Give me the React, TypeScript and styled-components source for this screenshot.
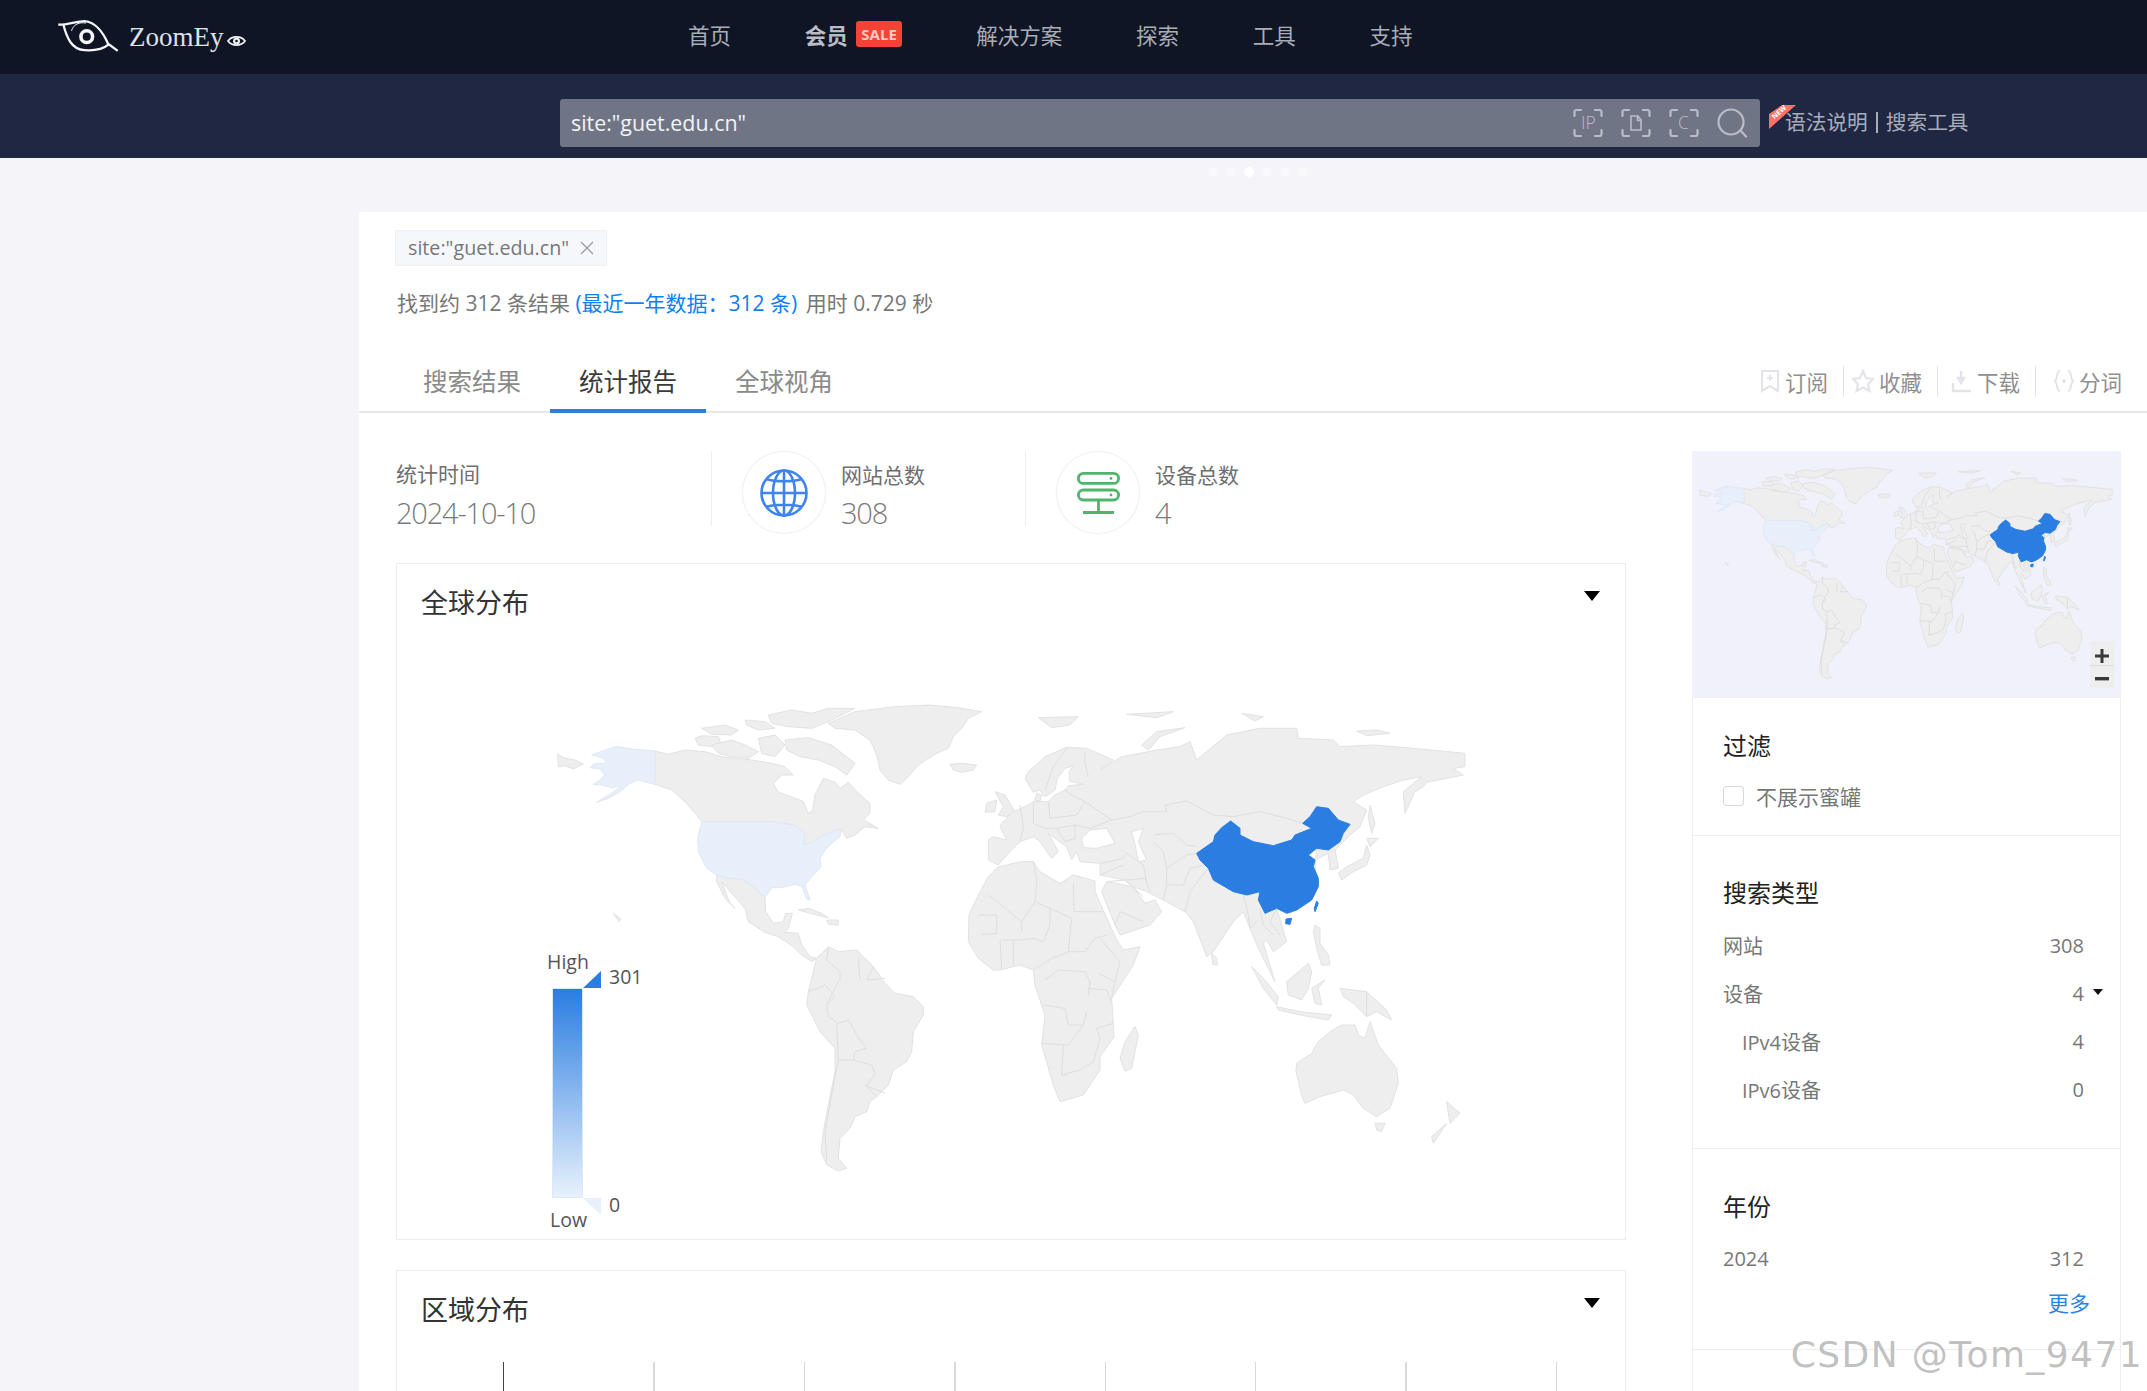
import React from 'react'
import styled, { createGlobalStyle } from 'styled-components'

const FONT = `"Open Sans", "Noto Sans CJK SC", sans-serif`

const GlobalStyle = createGlobalStyle`
  html, body {
    margin: 0;
    height: 1391px;
    overflow: hidden;
    background: #f4f4f9;
    font-family: ${FONT};
  }
  * { box-sizing: border-box; }
`

// map paths: coordinates are 3x screen pixels, left part and right part of the map
const LAND_LEFT = [
  'M38,178 L60,190 L90,195 L115,207 L85,222 L60,212 L40,215 Z',
  'M330,168 L370,178 L420,165 L480,170 L530,185 L570,190 L620,195 L680,205 L720,215 L745,240 L710,240 L685,265 L700,292 L740,305 L775,320 L790,355 L803,345 L810,300 L835,250 L870,262 L885,280 L910,262 L935,290 L975,325 L975,355 L955,375 L1000,400 L960,395 L930,420 L905,430 L888,402 L860,410 L830,425 L800,442 L775,450 L780,415 L745,390 L680,380 L470,380 L455,360 L420,320 L380,285 L330,268 Z',
  'M450,130 L470,122 L520,125 L530,150 L500,155 L460,150 Z',
  'M500,150 L560,135 L600,150 L640,170 L610,190 L560,185 L520,175 Z',
  'M470,100 L540,90 L580,105 L560,120 L500,118 Z',
  'M600,75 L660,80 L690,100 L640,105 L605,90 Z',
  'M670,60 L740,45 L800,55 L850,40 L930,40 L860,75 L800,100 L730,95 L680,85 Z',
  'M720,135 L790,128 L860,150 L930,205 L905,240 L870,215 L820,195 L765,185 L725,165 Z',
  'M640,130 L690,120 L720,150 L690,185 L650,175 Z',
  'M850,85 L930,50 L1050,35 L1150,30 L1240,38 L1310,50 L1270,70 L1250,100 L1225,125 L1210,160 L1175,175 L1120,210 L1085,250 L1065,268 L1030,255 L1005,225 L995,180 L975,135 L930,105 L870,100 Z',
  'M1215,208 L1250,205 L1295,210 L1285,225 L1250,232 L1225,225 Z',
  'M515,540 L555,550 L590,552 L625,575 L660,608 L662,650 L685,685 L715,680 L722,655 L742,655 L730,700 L720,712 L760,715 L770,750 L795,785 L815,790 L800,800 L770,780 L745,755 L700,725 L660,712 L610,680 L600,640 L565,600 L530,560 L555,625 L570,640 L540,610 L515,560 Z',
  'M760,645 L790,640 L830,655 L850,668 L815,660 Z',
  'M845,675 L880,675 L880,690 L850,688 Z',
  'M205,655 L228,672 L222,680 Z',
  'M815,790 L850,755 L880,770 L935,765 L985,815 L1020,865 L1050,895 L1105,905 L1135,935 L1135,960 L1105,1010 L1100,1070 L1085,1100 L1045,1125 L1030,1170 L995,1205 L975,1220 L965,1250 L930,1265 L915,1300 L885,1330 L880,1390 L905,1420 L880,1428 L845,1410 L828,1370 L835,1310 L850,1230 L870,1130 L870,1060 L825,1010 L785,930 L790,890 Z',
  'M1350,290 L1380,300 L1410,350 L1385,365 L1360,360 L1375,335 Z',
  'M1325,325 L1355,315 L1350,350 L1320,352 Z',
]

const BORDERS_LEFT = [
  'M880,860 L845,930 L850,965 L880,985 L910,975 L945,1035 L965,1060 L930,1070 L925,1095 L980,1110 L990,1135 L965,1175 L995,1205',
  'M850,760 L845,795 L885,830 L885,860',
  'M940,790 L945,855',
  'M985,815 L965,855 L1020,850',
  'M790,890 L840,870 L870,905 L845,930',
  'M875,985 L880,1095 L925,1095',
  'M880,1095 L860,1200 L840,1310 L845,1400',
  'M960,1170 L1020,1195',
]

const USA = [
  'M470,380 L680,380 L745,390 L780,415 L775,450 L800,442 L830,425 L860,410 L888,402 L885,425 L860,445 L840,465 L825,490 L828,515 L800,545 L780,570 L795,615 L785,612 L772,575 L750,568 L710,578 L680,578 L660,608 L625,575 L590,552 L555,550 L515,540 L485,520 L460,470 L458,430 Z',
  'M330,168 L330,268 L305,262 L280,255 L255,265 L225,290 L185,312 L155,322 L195,298 L230,272 L200,278 L170,270 L145,268 L165,255 L180,240 L165,222 L135,218 L150,205 L185,205 L175,190 L140,180 L180,165 L215,154 L260,162 Z',
]

const LAND_RIGHT = [
  // africa
  'M-5,515 L0,515 L60,500 L100,500 L120,530 L180,565 L220,540 L285,558 L285,590 L350,735 L370,765 L420,755 L400,810 L335,910 L342,1025 L300,1085 L300,1125 L250,1200 L180,1220 L160,1170 L125,1050 L135,960 L105,870 L100,825 L60,810 L0,825 L-20,825 L-65,790 L-95,740 L-93,660 L-65,600 L-35,545 Z',
  'M405,995 L415,1020 L395,1120 L375,1128 L360,1090 L375,1040 Z',
  'M305,590 L320,560 L400,575 L435,625 L465,615 L485,650 L450,690 L360,720 L345,690 Z',
  // eurasia with black sea and caspian
  'M-35,435 L-20,425 L20,435 L0,395 L5,385 L40,350 L75,335 L100,320 L145,320 L165,300 L195,285 L205,272 L250,268 L208,258 L208,228 L222,212 L195,220 L172,250 L165,285 L135,305 L118,285 L100,292 L75,250 L85,230 L135,185 L200,157 L260,160 L340,195 L300,225 L365,185 L420,175 L470,165 L540,155 L570,140 L590,195 L680,120 L780,100 L890,100 L895,130 L1000,135 L1020,155 L1120,150 L1240,160 L1395,175 L1395,215 L1360,220 L1390,240 L1280,262 L1270,275 L1245,290 L1215,355 L1210,290 L1265,245 L1210,255 L1150,275 L1090,300 L1060,320 L1100,345 L1080,395 L1050,420 L1030,440 L1005,465 L1015,520 L990,525 L985,475 L945,495 L925,480 L950,460 L945,510 L955,570 L930,620 L870,655 L830,640 L860,740 L820,770 L800,735 L790,745 L825,860 L775,760 L750,700 L730,650 L700,680 L640,770 L620,785 L580,680 L555,650 L490,615 L440,590 L400,575 L375,555 L300,540 L300,505 L240,500 L230,470 L215,495 L200,455 L145,415 L175,470 L155,490 L120,440 L100,425 L60,440 L30,470 L-5,510 L-35,495 Z M245,430 L270,405 L320,400 L345,445 L290,460 L250,458 Z M395,410 L430,400 L415,440 L440,495 L415,500 L405,450 Z',
  'M105,318 L110,295 L125,300 L120,318 Z',
  'M1015,535 L1040,515 L1090,490 L1100,450 L1110,480 L1100,510 L1060,530 L1025,555 Z',
  'M1100,430 L1135,430 L1110,455 Z',
  'M1110,330 L1125,385 L1115,415 L1105,370 Z',
  'M945,690 L960,700 L960,745 L985,780 L990,810 L965,810 L950,760 L940,710 Z',
  'M755,815 L790,850 L835,905 L830,930 L790,880 Z',
  'M830,935 L900,950 L995,960 L985,975 L900,960 L835,945 Z',
  'M860,860 L925,805 L935,830 L925,880 L905,915 L865,900 Z',
  'M935,880 L975,855 L955,880 L965,930 L945,925 Z',
  'M1020,880 L1100,890 L1160,945 L1175,975 L1130,950 L1100,965 L1060,925 L1030,905 Z',
  'M635,775 L650,790 L652,810 L638,808 Z',
  'M890,1105 L935,1075 L955,1040 L990,1010 L1025,990 L1065,990 L1075,1020 L1095,1030 L1110,980 L1135,1050 L1190,1120 L1195,1165 L1170,1240 L1130,1265 L1090,1240 L1060,1200 L1030,1185 L960,1205 L915,1225 L905,1200 L888,1130 Z',
  'M1125,1285 L1155,1285 L1145,1310 L1130,1305 Z',
  'M1340,1220 L1380,1255 L1350,1285 L1345,1255 Z',
  'M1340,1285 L1300,1345 L1295,1325 Z',
  'M115,68 L235,65 L210,90 L155,98 Z',
  'M380,58 L520,50 L470,68 Z',
  'M725,55 L790,65 L765,78 Z',
  'M1070,108 L1130,105 L1170,115 L1100,122 Z',
  'M425,150 L470,110 L555,98 L480,125 L445,165 Z',
]

const BORDERS_RIGHT = [
  'M-35,600 L-15,615 L65,680 L65,710',
  'M-65,660 L-10,660 L-10,715 L-55,718',
  'M100,500 L110,555 L105,620 L65,680',
  'M220,565 L222,650 L310,650',
  'M150,640 L215,670 L205,770',
  'M105,620 L150,640 L150,690 L130,740 L100,730 L60,735 L10,735',
  'M205,770 L255,770 L285,730 L320,720',
  'M300,730 L360,800 L345,860',
  'M100,825 L155,790 L205,770',
  'M135,855 L175,825 L255,830 L270,860 L265,900',
  'M295,835 L345,860 L335,910',
  'M265,880 L320,885 L335,925',
  'M130,930 L195,940 L205,990 L250,990 L260,950',
  'M125,1045 L205,1050 L250,990',
  'M190,1050 L185,1140 L200,1140',
  'M340,985 L290,1000 L300,1030 L280,1100',
  'M185,1140 L240,1125 L280,1100',
  'M0,735 L5,820',
  'M40,735 L40,810',
  'M60,330 L70,400 L60,440',
  'M100,320 L100,385 L135,400',
  'M145,320 L150,370 L230,360 L255,320 L215,300 L195,285',
  'M255,320 L335,375 L270,400 L225,390 L170,400 L135,400',
  'M170,400 L195,440',
  'M225,390 L225,430 L195,440',
  'M200,160 L160,215 L135,285',
  'M255,170 L255,205 L265,245',
  'M335,375 L390,365 L430,350 L500,350 L495,330 L560,318 L640,360 L700,365 L780,350 L860,370 L908,385',
  'M305,505 L370,490 L380,475 L430,510 L440,560',
  'M300,540 L370,510',
  'M380,555 L435,550 L450,590',
  'M460,440 L490,470 L500,520 L500,570 L490,615',
  'M500,520 L560,480 L590,475',
  'M500,570 L550,570 L570,520 L610,510',
  'M555,650 L570,590 L600,550 L625,520',
  'M460,420 L520,415 L560,450 L590,455',
  'M640,555 L700,590',
  'M730,600 L745,660 L750,700 L770,680',
  'M780,640 L790,690 L820,720',
  'M830,640 L810,680 L840,720',
  'M320,560 L375,555 L430,605',
  'M345,690 L360,650 L430,680',
  'M1100,890 L1100,965',
]

const CHINA = [
  'M590,475 L640,440 L645,420 L665,398 L692,378 L720,400 L720,420 L760,440 L820,452 L875,435 L885,420 L935,400 L908,385 L930,365 L950,335 L985,340 L1015,375 L1050,388 L1030,415 L1020,440 L985,465 L950,460 L925,480 L945,495 L940,515 L955,550 L955,575 L935,615 L890,645 L860,655 L830,640 L795,655 L775,615 L780,590 L740,600 L700,590 L640,555 L625,520 L600,495 Z',
  'M950,618 L955,625 L945,650 L943,640 Z',
  'M858,672 L875,670 L870,688 L857,686 Z',
]

const WorldMap = ({ width, height }: { width: number; height: number }) => (
  <svg width={width} height={height} viewBox="0 0 2805 1470" preserveAspectRatio="none">
    <g fill="#eeeeee" stroke="#e2e2e2">
      {LAND_LEFT.map((d) => <path key={d} d={d} vectorEffect="non-scaling-stroke" />)}
    </g>
    <g fill="none" stroke="#dedede">
      {BORDERS_LEFT.map((d) => <path key={d} d={d} vectorEffect="non-scaling-stroke" />)}
    </g>
    <g fill="#e7effa" stroke="#dfe8f5">
      {USA.map((d) => <path key={d} d={d} vectorEffect="non-scaling-stroke" />)}
    </g>
    <g transform="translate(1365 0)">
      <g fill="#eeeeee" stroke="#e2e2e2" fillRule="evenodd">
        {LAND_RIGHT.map((d) => <path key={d} d={d} vectorEffect="non-scaling-stroke" />)}
      </g>
      <g fill="none" stroke="#dedede">
        {BORDERS_RIGHT.map((d) => <path key={d} d={d} vectorEffect="non-scaling-stroke" />)}
      </g>
      <g fill="#2a7de1" stroke="#2a7de1">
        {CHINA.map((d) => <path key={d} d={d} vectorEffect="non-scaling-stroke" />)}
      </g>
    </g>
  </svg>
)

const Logo = () => (
  <svg width="63" height="35" viewBox="80 55 195 105" fill="none" stroke="#f4f5f7">
    <path strokeWidth="7" d="M84,70 C105,75 125,62 165,60 C200,62 225,100 238,130 L268,152" />
    <path strokeWidth="7" d="M100,72 C110,110 125,148 165,150 C195,152 225,145 240,132" />
    <circle cx="172" cy="108" r="18" strokeWidth="11" />
    <path strokeWidth="3" d="M125,90 C130,70 150,62 170,66" />
  </svg>
)

const SmallEye = () => (
  <svg width="19" height="14" viewBox="0 0 19 14" fill="none" stroke="#f0f1f3">
    <path strokeWidth="1.8" d="M1,7 C5,1.5 14,1.5 18,7 C14,12.5 5,12.5 1,7 Z" />
    <circle cx="9.5" cy="7" r="2.4" strokeWidth="2.2" />
  </svg>
)

const ScanIcon = ({ children }: { children: React.ReactNode }) => (
  <svg width="30" height="30" viewBox="0 0 30 30" fill="none" stroke="#b9bcc7" strokeWidth="2.2" strokeLinecap="round">
    <path d="M8,2 H3.5 Q1.5,2 1.5,4 V8 M22,2 H26.5 Q28.5,2 28.5,4 V8 M1.5,22 V26 Q1.5,28 3.5,28 H8 M28.5,22 V26 Q28.5,28 26.5,28 H22" />
    {children}
  </svg>
)

const ScanLabel = styled.text`
  font-family: ${FONT};
  font-size: 17.5px;
  font-weight: 300;
  fill: #b9bcc7;
  stroke: none;
`

const SearchGlass = () => (
  <svg width="31" height="30" viewBox="0 0 31 30" fill="none" stroke="#b9bcc7" strokeWidth="2.2" strokeLinecap="round">
    <circle cx="14" cy="14" r="12.5" />
    <path d="M23.5,22.5 L29,28.5" />
  </svg>
)

const NewRibbon = () => (
  <RibbonBox width="27" height="24" viewBox="0 0 27 24">
    <path d="M0,9 L13,0 L27,0 L0,24 Z" fill="#f97366" />
    <RibbonLabel transform="translate(5.5 14.5) rotate(-42)">NEW</RibbonLabel>
  </RibbonBox>
)

const GlobeIcon = () => (
  <svg width="48" height="48" viewBox="0 0 48 48" fill="none" stroke="#3f83f0" strokeWidth="2.6">
    <circle cx="24" cy="24" r="22.5" />
    <ellipse cx="24" cy="24" rx="11" ry="22.5" />
    <path d="M24,1.5 V46.5 M1.5,24 H46.5 M6,10 C15,13 33,13 42,10 M6,38 C15,35 33,35 42,38" />
  </svg>
)

const ServerIcon = () => (
  <svg width="43" height="42" viewBox="0 0 43 42" fill="none" stroke="#4fb56c" strokeWidth="2.8">
    <rect x="1.4" y="1.4" width="40.2" height="10" rx="5" />
    <rect x="1.4" y="18" width="40.2" height="10" rx="5" />
    <circle cx="34" cy="6.4" r="1.4" fill="#4fb56c" stroke="none" />
    <circle cx="34" cy="23" r="1.4" fill="#4fb56c" stroke="none" />
    <path d="M21.5,28 V40 M6,40.5 H37" />
  </svg>
)

const BookmarkIcon = () => (
  <svg width="20" height="24" viewBox="0 0 20 24" fill="none" stroke="#e3e4e9" strokeWidth="2.2">
    <path d="M2,2 H18 V22 L10,17 L2,22 Z" />
    <path d="M10,6 V12 M7,9 H13" />
  </svg>
)

const StarIcon = () => (
  <svg width="22" height="24" viewBox="0 0 22 24" fill="none" stroke="#e3e4e9" strokeWidth="2.2">
    <path d="M11,2 L14,9 L21,10 L16,15 L17.5,22 L11,18.5 L4.5,22 L6,15 L1,10 L8,9 Z" />
  </svg>
)

const DownloadIcon = () => (
  <svg width="21" height="24" viewBox="0 0 21 24" fill="none" stroke="#e3e4e9" strokeWidth="2.4">
    <path d="M2,14 V22 H20" />
    <path d="M10,2 V11" />
    <path d="M7,9 L10,14 L13,9 Z" fill="#e3e4e9" />
  </svg>
)

const BracesIcon = () => (
  <svg width="20" height="24" viewBox="0 0 20 24" fill="none" stroke="#e3e4e9" strokeWidth="2">
    <path d="M6,2 C2,2 4,10 1,12 C4,14 2,22 6,22 M14,2 C18,2 16,10 19,12 C16,14 18,22 14,22" />
    <circle cx="10" cy="12" r="1" fill="#e3e4e9" />
  </svg>
)

const NAV_ITEMS = ['首页', '会员', '解决方案', '探索', '工具', '支持']
const TABS = ['搜索结果', '统计报告', '全球视角']
const GRID_LINES = [true, false, false, false, false, false, false, false]

export default function App() {
  return (
    <Page>
      <GlobalStyle />
      <TopBar>
        <Brand>
          <Logo />
          <BrandName>ZoomEy</BrandName>
          <BrandEye><SmallEye /></BrandEye>
        </Brand>
        <Nav>
          {NAV_ITEMS.map((item) => (
            <NavItem key={item} $bold={item === '会员'}>
              {item}
              {item === '会员' && <SaleBadge>SALE</SaleBadge>}
            </NavItem>
          ))}
        </Nav>
      </TopBar>

      <SearchBand>
        <SearchBox>
          <SearchText>site:"guet.edu.cn"</SearchText>
          <SearchIcons>
            <ScanIcon><ScanLabel x="8" y="21">IP</ScanLabel></ScanIcon>
            <ScanIcon>
              <path d="M10,8 H17 L20,12 V22 H10 Z M16.5,8 V12.5 H20" strokeWidth="1.6" />
            </ScanIcon>
            <ScanIcon><ScanLabel x="9" y="21">C</ScanLabel></ScanIcon>
            <SearchGlass />
          </SearchIcons>
        </SearchBox>
        <SearchLinks>
          <NewRibbon />
          语法说明
          <LinkDivider />
          搜索工具
        </SearchLinks>
      </SearchBand>

      <Dots>
        {[0, 1, 2, 3, 4, 5].map((i) => <Dot key={i} $active={i === 2} />)}
      </Dots>

      <Panel>
        <PanelHead>
          <QueryTag>
            site:"guet.edu.cn"
            <svg width="14" height="14" viewBox="0 0 14 14" stroke="#9a9ca3" strokeWidth="1.3">
              <path d="M1,1 L13,13 M13,1 L1,13" />
            </svg>
          </QueryTag>
          <Summary>
            找到约 312 条结果 <Accent>(最近一年数据：312 条)</Accent> 用时 0.729 秒
          </Summary>
        </PanelHead>

        <TabBar>
          <Tabs>
            {TABS.map((tab) => (
              <Tab key={tab} $active={tab === '统计报告'}>{tab}</Tab>
            ))}
          </Tabs>
          <Actions>
            <Action><BookmarkIcon />订阅</Action>
            <Action $pad={8}><StarIcon />收藏</Action>
            <Action $pad={13}><DownloadIcon />下载</Action>
            <Action $pad={18}><BracesIcon />分词</Action>
          </Actions>
        </TabBar>

        <Content>
          <MainColumn>
            <Stats>
              <DateStat>
                <StatLabel $tight>统计时间</StatLabel>
                <StatValue>2024-10-10</StatValue>
              </DateStat>
              <IconStat>
                <IconCircle><GlobeIcon /></IconCircle>
                <div>
                  <StatLabel>网站总数</StatLabel>
                  <StatValue>308</StatValue>
                </div>
              </IconStat>
              <IconStat $last>
                <IconCircle><ServerIcon /></IconCircle>
                <div>
                  <StatLabel>设备总数</StatLabel>
                  <StatValue>4</StatValue>
                </div>
              </IconStat>
            </Stats>

            <Card>
              <CardHead>
                <CardTitle>全球分布</CardTitle>
                <CardCaret />
              </CardHead>
              <MapArea>
                <WorldMap width={935} height={490} />
                <Legend>
                  <LegendHigh>High</LegendHigh>
                  <LegendBar />
                  <LegendMaxMark />
                  <LegendMax>301</LegendMax>
                  <LegendMinMark />
                  <LegendMin>0</LegendMin>
                  <LegendLow>Low</LegendLow>
                </Legend>
              </MapArea>
            </Card>

            <LastCard>
              <CardHead>
                <CardTitle>区域分布</CardTitle>
                <CardCaret />
              </CardHead>
              <GridLines>
                {GRID_LINES.map((dark, i) => <GridLine key={i} $dark={dark} />)}
              </GridLines>
            </LastCard>
          </MainColumn>

          <SideColumn>
            <MiniMap>
              <WorldMap width={425} height={222} />
              <ZoomControl>
                <ZoomButton $top>
                  <svg width="14" height="14" viewBox="0 0 14 14" fill="#3a3a3a">
                    <path d="M5.5,0 H8.5 V5.5 H14 V8.5 H8.5 V14 H5.5 V8.5 H0 V5.5 H5.5 Z" />
                  </svg>
                </ZoomButton>
                <ZoomButton>
                  <svg width="14" height="4" viewBox="0 0 14 4" fill="#3a3a3a">
                    <rect width="14" height="3.4" />
                  </svg>
                </ZoomButton>
              </ZoomControl>
            </MiniMap>

            <SideBox>
              <FilterSection>
                <SideTitle>过滤</SideTitle>
                <CheckRow>
                  <CheckBox />
                  不展示蜜罐
                </CheckRow>
              </FilterSection>

              <TypeSection>
                <SideTitle>搜索类型</SideTitle>
                <Rows>
                  <Row><span>网站</span><span>308</span></Row>
                  <Row><span>设备</span><Count>4</Count></Row>
                  <Row $sub><span>IPv4设备</span><span>4</span></Row>
                  <Row $sub><span>IPv6设备</span><span>0</span></Row>
                </Rows>
              </TypeSection>

              <YearSection>
                <SideTitle>年份</SideTitle>
                <YearRows>
                  <Row><span>2024</span><span>312</span></Row>
                </YearRows>
                <More>更多</More>
              </YearSection>
            </SideBox>
          </SideColumn>
        </Content>
      </Panel>
      <Watermark>CSDN @Tom_9471</Watermark>
    </Page>
  )
}

const Page = styled.div`
  position: relative;
  height: 1391px;
  overflow: hidden;
  background: #f4f4f9;
`

const TopBar = styled.header`
  display: flex;
  align-items: center;
  height: 74px;
  padding: 0 0 2px 57px;
  background: #0f1524;
`

const Brand = styled.div`
  display: flex;
  align-items: center;
  width: 631px;
`

const BrandName = styled.span`
  margin-left: 9px;
  padding-top: 3px;
  font-family: "Liberation Serif", serif;
  font-size: 27px;
  color: #dfe1e6;
`

const BrandEye = styled.span`
  display: flex;
  margin: 10px 0 0 3px;
`

const Nav = styled.nav`
  display: flex;
  gap: 73.8px;
`

const NavItem = styled.a<{ $bold?: boolean }>`
  display: flex;
  align-items: center;
  font-size: 21.5px;
  line-height: 30px;
  font-weight: ${({ $bold }) => ($bold ? 700 : 400)};
  color: ${({ $bold }) => ($bold ? '#b9bcc4' : '#a9adb8')};
`

const SaleBadge = styled.span`
  margin-left: 8px;
  padding: 0 5.5px;
  height: 26px;
  border-radius: 3px;
  background: #f44336;
  font-family: "Open Sans", sans-serif;
  font-size: 15px;
  line-height: 26px;
  font-weight: 700;
  color: #ffc9c4;
  margin-top: -4px;
`

const SearchBand = styled.div`
  display: flex;
  align-items: center;
  height: 84px;
  padding: 14px 0 0 560px;
  background: #1f2742;
`

const SearchBox = styled.div`
  display: flex;
  align-items: center;
  justify-content: space-between;
  width: 1200px;
  height: 48px;
  padding: 0 12px 0 11px;
  border-radius: 3px;
  background: #707586;
`

const SearchText = styled.span`
  padding-bottom: 2px;
  font-size: 21.4px;
  color: #f2f3f5;
`

const SearchIcons = styled.div`
  display: flex;
  align-items: center;
  gap: 18px;
`

const SearchLinks = styled.div`
  position: relative;
  display: flex;
  align-items: center;
  margin: -2px 0 0 25px;
  font-size: 20.7px;
  line-height: 30px;
  color: #a9adba;
`

const RibbonBox = styled.svg`
  position: absolute;
  left: -16px;
  top: -2px;
  overflow: visible;
`

const RibbonLabel = styled.text`
  font-family: "Open Sans", sans-serif;
  font-size: 7px;
  font-weight: 700;
  fill: #fff;
`

const LinkDivider = styled.i`
  width: 2px;
  height: 21px;
  margin: 0 8px;
  background: #a9adba;
`

const Dots = styled.div`
  display: flex;
  gap: 8px;
  height: 54px;
  padding: 9px 0 0 1208px;
`

const Dot = styled.i<{ $active?: boolean }>`
  width: 10px;
  height: 10px;
  border-radius: 50%;
  background: ${({ $active }) => ($active ? '#ffffff' : '#f9f9fc')};
`

const Panel = styled.main`
  margin-left: 359px;
  height: 1179px;
  background: #fff;
`

const PanelHead = styled.div`
  height: 139px;
  padding: 18px 0 0 36px;
`

const QueryTag = styled.div`
  display: inline-flex;
  align-items: center;
  gap: 11px;
  height: 36px;
  padding: 0 12px 2px;
  border: 1px solid #eeeff2;
  border-radius: 2px;
  background: #f6f7fb;
  font-size: 19.7px;
  color: #777;

  svg {
    margin-top: 2px;
  }
`

const Summary = styled.p`
  margin: 23px 0 0 2px;
  font-size: 21px;
  line-height: 28px;
  color: #777;
`

const Accent = styled.span`
  margin-right: 3px;
  color: #0d7ff2;
`

const TabBar = styled.div`
  display: flex;
  justify-content: space-between;
  height: 62px;
  padding: 0 25px 0 35px;
  border-bottom: 2px solid #e8e8e8;
`

const Tabs = styled.div`
  display: flex;
`

const Tab = styled.div<{ $active?: boolean }>`
  width: 156px;
  height: 62px;
  text-align: center;
  font-size: 24.5px;
  line-height: 62px;
  color: ${({ $active }) => ($active ? '#3a3a3a' : '#8a8a8a')};
  border-bottom: 4px solid ${({ $active }) => ($active ? '#2a7de1' : 'transparent')};
`

const Actions = styled.div`
  display: flex;
  align-items: center;
`

const Action = styled.div<{ $pad?: number }>`
  display: flex;
  align-items: center;
  gap: 5px;
  height: 31px;
  font-size: 21.5px;
  color: #8f8f8f;
  padding-left: ${({ $pad }) => ($pad ? `${$pad}px` : '0')};
  margin-left: ${({ $pad }) => ($pad ? '15px' : '0')};
  border-left: ${({ $pad }) => ($pad ? '1px solid #e4e4e4' : 'none')};
`

const Content = styled.div`
  display: flex;
  gap: 66px;
  padding: 38px 0 0 37px;
`

const MainColumn = styled.div`
  width: 1230px;
`

const Stats = styled.div`
  display: flex;
  height: 83px;
`

const DateStat = styled.div`
  width: 316px;
  height: 75px;
  border-right: 1px solid #eee;
`

const IconStat = styled.div<{ $last?: boolean }>`
  display: flex;
  gap: 15px;
  width: ${({ $last }) => ($last ? '300px' : '314px')};
  height: 75px;
  padding-left: 30px;
  border-right: ${({ $last }) => ($last ? 'none' : '1px solid #eee')};
`

const IconCircle = styled.div`
  display: flex;
  align-items: center;
  justify-content: center;
  flex: none;
  width: 84px;
  height: 83px;
  border: 1px solid #f0f0f0;
  border-radius: 50%;
  box-shadow: 0 0 2px #f4f4f4;
`

const StatLabel = styled.div<{ $tight?: boolean }>`
  padding-top: ${({ $tight }) => ($tight ? '7px' : '9px')};
  font-size: 21px;
  line-height: ${({ $tight }) => ($tight ? '32px' : '30px')};
  color: #6f6f6f;
`

const StatValue = styled.div`
  margin-top: 6px;
  font-size: 29px;
  font-weight: 300;
  line-height: 34px;
  letter-spacing: -1.2px;
  color: #7a7a7a;
`

const Card = styled.section`
  height: 677px;
  margin-top: 29px;
  border: 1px solid #ececec;
`

const LastCard = styled(Card)`
  height: 200px;
  margin-top: 30px;
`

const CardHead = styled.div`
  display: flex;
  justify-content: space-between;
  height: 38px;
  margin-top: 20px;
  padding: 0 25px 0 24px;
`

const CardTitle = styled.h3`
  margin: 0;
  font-size: 27px;
  font-weight: 400;
  line-height: 38px;
  color: #333;
`

const CardCaret = styled.i`
  width: 0;
  height: 0;
  margin-top: 7px;
  border-left: 8px solid transparent;
  border-right: 8px solid transparent;
  border-top: 10px solid #000;
`

const MapArea = styled.div`
  position: relative;
  padding: 73px 0 0 148px;
`

const Legend = styled.div`
  position: absolute;
  left: 150px;
  top: 325px;
  width: 100px;
  height: 270px;
  font-family: "Open Sans", sans-serif;
  font-size: 19.5px;
  color: #555;
`

const LegendBar = styled.div`
  position: absolute;
  left: 5px;
  top: 41px;
  width: 31px;
  height: 210px;
  border: 1px solid #dce8f8;
  background: linear-gradient(#2a7de1, #e8f1fc);
`

const LegendHigh = styled.span`
  position: absolute;
  left: 0;
  top: 1px;
  line-height: 28px;
`

const LegendLow = styled.span`
  position: absolute;
  left: 3px;
  top: 259px;
  line-height: 28px;
`

const LegendMax = styled.span`
  position: absolute;
  left: 62px;
  top: 16px;
  line-height: 28px;
`

const LegendMin = styled.span`
  position: absolute;
  left: 62px;
  top: 244px;
  line-height: 28px;
`

const LegendMaxMark = styled.i`
  position: absolute;
  left: 36px;
  top: 24px;
  width: 18px;
  height: 17px;
  background: #2a7de1;
  clip-path: polygon(100% 0, 100% 100%, 0 100%);
`

const LegendMinMark = styled.i`
  position: absolute;
  left: 36px;
  top: 251px;
  width: 18px;
  height: 17px;
  background: #e8f0fb;
  clip-path: polygon(0 0, 100% 0, 100% 100%);
`

const GridLines = styled.div`
  display: flex;
  gap: 149px;
  margin-top: 33px;
  padding-left: 106px;
`

const GridLine = styled.i<{ $dark?: boolean }>`
  width: 1.4px;
  height: 60px;
  background: ${({ $dark }) => ($dark ? '#444' : '#d9d9d9')};
`

const SideColumn = styled.aside`
  width: 429px;
`

const MiniMap = styled.div`
  position: relative;
  height: 246px;
  padding: 12px 0 0 2px;
  background: #f0f1fa;
  overflow: hidden;
`

const ZoomControl = styled.div`
  position: absolute;
  right: 7px;
  bottom: 9px;
  width: 24px;
  background: #eeeeee;
`

const ZoomButton = styled.div<{ $top?: boolean }>`
  display: flex;
  align-items: center;
  justify-content: center;
  height: ${({ $top }) => ($top ? '25px' : '22px')};
  padding-top: ${({ $top }) => ($top ? '5px' : '4px')};
  border-bottom: ${({ $top }) => ($top ? '1px solid #ddd' : 'none')};
`

const SideBox = styled.div`
  height: 800px;
  border: 1px solid #eeeeee;
  border-bottom: none;
`

const SideTitle = styled.h4`
  margin: 0;
  font-size: 24px;
  font-weight: 400;
  line-height: 36px;
  color: #222;
`

const FilterSection = styled.div`
  height: 138px;
  padding: 30px 0 0 30px;
  border-bottom: 1px solid #eeeeee;
`

const CheckRow = styled.label`
  display: flex;
  align-items: center;
  gap: 12px;
  height: 32px;
  margin-top: 16px;
  font-size: 21px;
  color: #777;
`

const CheckBox = styled.i`
  width: 21px;
  height: 20px;
  border: 1px solid #d9d9d9;
  border-radius: 3px;
  background: #fff;
`

const TypeSection = styled.div`
  height: 313px;
  padding: 39px 36px 0 30px;
  border-bottom: 1px solid #eeeeee;
`

const YearSection = styled.div`
  height: 201px;
  padding: 40px 36px 0 30px;
  border-bottom: 1px solid #eeeeee;
`

const Rows = styled.div`
  margin-top: 10px;
`

const YearRows = styled(Rows)`
  margin-top: 9px;
`

const Row = styled.div<{ $sub?: boolean }>`
  display: flex;
  justify-content: space-between;
  align-items: center;
  height: 48px;
  padding-left: ${({ $sub }) => ($sub ? '19px' : '0')};
  font-size: 20px;
  color: #777;
`

const Count = styled.span`
  position: relative;

  &::after {
    content: '';
    position: absolute;
    left: calc(100% + 9px);
    top: 9px;
    border-left: 5.5px solid transparent;
    border-right: 5.5px solid transparent;
    border-top: 6px solid #111;
  }
`

const More = styled.div`
  margin: 1px -6px 0 0;
  text-align: right;
  font-size: 21px;
  line-height: 40px;
  color: #2a84e8;
`

const Watermark = styled.div`
  position: absolute;
  right: 4px;
  bottom: 14px;
  font-family: "DejaVu Sans", sans-serif;
  font-size: 36px;
  letter-spacing: 1.4px;
  line-height: 44px;
  color: rgba(165, 165, 165, 0.7);
  text-shadow: 1px 1px 1px rgba(255, 255, 255, 0.8);
`
